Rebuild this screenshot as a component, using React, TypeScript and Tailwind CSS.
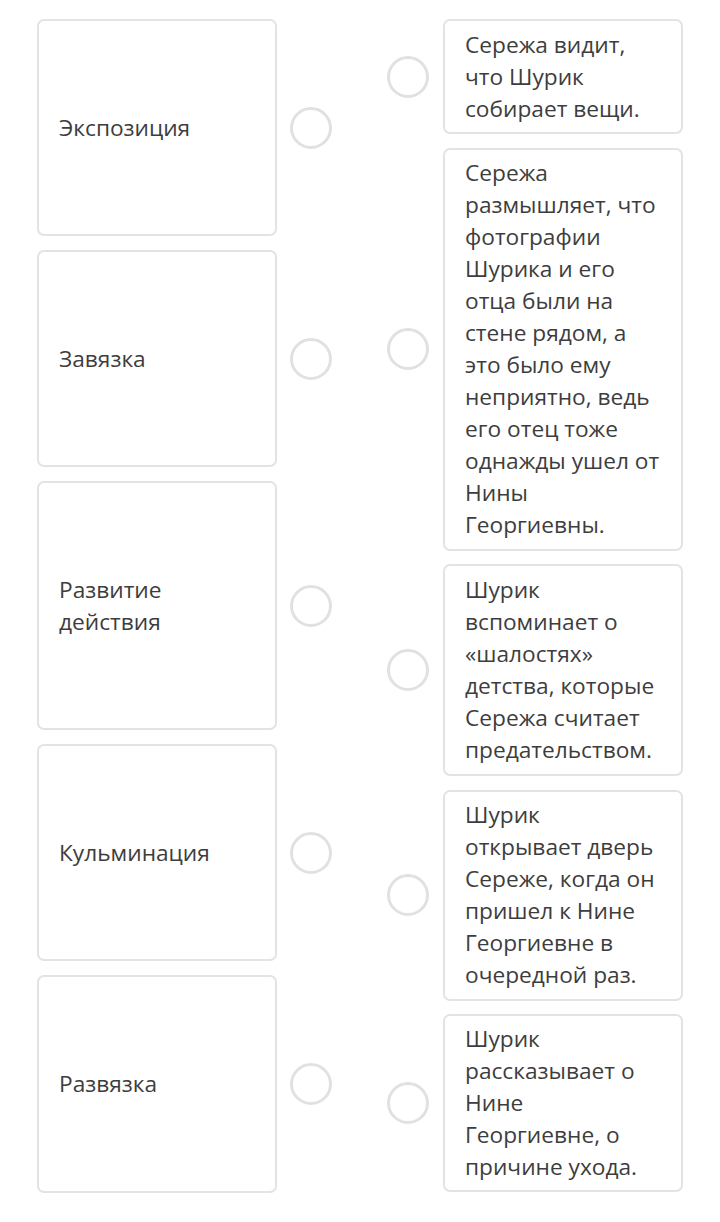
import React from "react";

const left = [
  { lines: ["Экспозиция"], h: "h-[217px]" },
  { lines: ["Завязка"], h: "h-[217px]" },
  { lines: ["Развитие", "действия"], h: "h-[249px]" },
  { lines: ["Кульминация"], h: "h-[217px]" },
  { lines: ["Развязка"], h: "h-[218px]" },
];

const right = [
  { lines: ["Сережа видит,", "что Шурик", "собирает вещи."], h: "h-[115px]" },
  {
    lines: [
      "Сережа",
      "размышляет, что",
      "фотографии",
      "Шурика и его",
      "отца были на",
      "стене рядом, а",
      "это было ему",
      "неприятно, ведь",
      "его отец тоже",
      "однажды ушел от",
      "Нины",
      "Георгиевны.",
    ],
    h: "h-[403px]",
  },
  { lines: ["Шурик", "вспоминает о", "«шалостях»", "детства, которые", "Сережа считает", "предательством."], h: "h-[212px]" },
  { lines: ["Шурик", "открывает дверь", "Сереже, когда он", "пришел к Нине", "Георгиевне в", "очередной раз."], h: "h-[211px]" },
  { lines: ["Шурик", "рассказывает о", "Нине", "Георгиевне, о", "причине ухода."], h: "h-[178px]" },
];

function Circle() {
  return <div className="w-[42px] h-[42px] shrink-0 rounded-full border-[3px] border-[#dfe2e5] bg-white" />;
}

function Lines({ lines }: { lines: string[] }) {
  return (
    <div className="whitespace-nowrap">
      {lines.map((l, i) => (
        <div key={i}>{l}</div>
      ))}
    </div>
  );
}

export default function App() {
  return (
    <div
      className="w-[720px] h-[1222px] bg-white flex pl-[37px] pt-[19px] gap-[55px] text-[#3d3d3d]"
      style={{ fontFamily: '"Open Sans", "Noto Sans", sans-serif' }}
    >
      <div className="flex flex-col gap-[14px]">
        {left.map((c, i) => (
          <div key={i} className="flex items-center gap-[13px]">
            <div
              className={`w-[240px] ${c.h} border-2 border-[#e3e3e3] rounded-[7px] flex items-center px-5 text-[22.7px] leading-[32px]`}
            >
              <Lines lines={c.lines} />
            </div>
            <Circle />
          </div>
        ))}
      </div>
      <div className="flex flex-col gap-[13.5px]">
        {right.map((c, i) => (
          <div key={i} className="flex items-center gap-[14px]">
            <Circle />
            <div
              className={`w-[240px] ${c.h} border-2 border-[#e3e3e3] rounded-[7px] flex items-center px-5 text-[22.7px] leading-[32px]`}
            >
              <Lines lines={c.lines} />
            </div>
          </div>
        ))}
      </div>
    </div>
  );
}
